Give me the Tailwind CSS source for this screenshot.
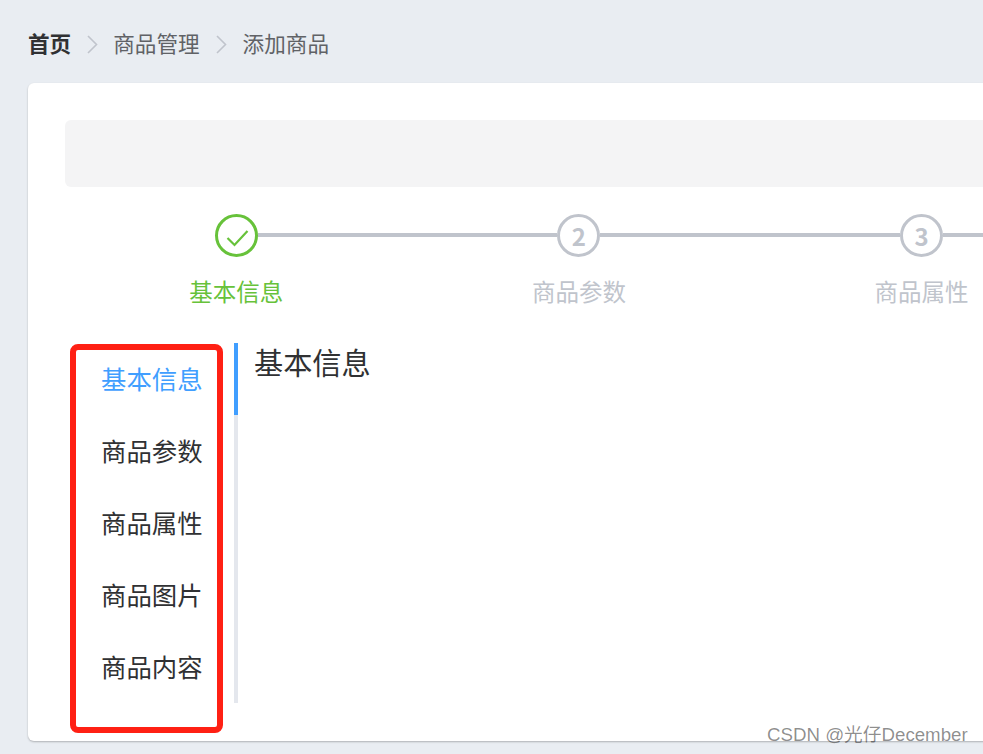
<!DOCTYPE html>
<html lang="zh-CN">
<head>
<meta charset="utf-8">
<script src="https://cdn.jsdelivr.net/npm/@tailwindcss/browser@4"></script>
</head>
<body class="m-0">
<div class="relative w-[983px] h-[754px] overflow-hidden bg-[#e9edf2] pl-[28px] pt-[28px] font-['Noto_Sans_CJK_SC','Noto_Sans',sans-serif]">
  <nav class="flex items-center h-[30px] text-[21.6px] leading-[30px]">
    <span class="font-bold text-[#303133]">首页</span>
    <svg class="ml-[16px] mr-[15px] w-[11px] h-[19px] relative top-[1px]" viewBox="0 0 11 19" fill="none" stroke="#c0c4cc" stroke-width="1.6"><path d="M1 1l8.500 8.500L1 18"/></svg>
    <span class="text-[#606266]">商品管理</span>
    <svg class="ml-[16px] mr-[16px] w-[11px] h-[19px] relative top-[1px]" viewBox="0 0 11 19" fill="none" stroke="#c0c4cc" stroke-width="1.6"><path d="M1 1l8.500 8.500L1 18"/></svg>
    <span class="text-[#606266]">添加商品</span>
  </nav>
  <main class="mt-[25px] w-[1000px] h-[658px] overflow-hidden rounded-[6px] bg-white shadow-[0_1px_2px_rgba(0,0,0,0.25)] pl-[37px] pt-[37px]">
    <div class="h-[67px] rounded-[6px] bg-[#f4f4f5]"></div>
    <div class="flex mt-[27px]">
      <div class="w-[342.6px] shrink-0 flex flex-col items-center">
        <div class="flex items-center w-full">
          <div class="flex-1"></div>
          <div class="w-[43px] h-[43px] shrink-0 rounded-full border-[3px] border-[#67c23a] flex items-center justify-center">
            <svg class="w-[37px] h-[37px]" viewBox="0 0 37 37" fill="none" stroke="#67c23a" stroke-width="2.200"><path d="M9.500 21l7 7 13-14"/></svg>
          </div>
          <div class="flex-1 h-[4px] relative top-[-1px] bg-[#c0c4cc]"></div>
        </div>
        <div class="mt-[16px] text-[23.5px] leading-[36px] text-[#67c23a]">基本信息</div>
      </div>
      <div class="w-[342.6px] shrink-0 flex flex-col items-center">
        <div class="flex items-center w-full">
          <div class="flex-1 h-[4px] relative top-[-1px] bg-[#c0c4cc]"></div>
          <div class="w-[43px] h-[43px] shrink-0 rounded-full border-[3px] border-[#c0c4cc] flex items-center justify-center text-[24px] font-bold leading-none text-[#c0c4cc]">2</div>
          <div class="flex-1 h-[4px] relative top-[-1px] bg-[#c0c4cc]"></div>
        </div>
        <div class="mt-[16px] text-[23.5px] leading-[36px] text-[#c0c4cc]">商品参数</div>
      </div>
      <div class="w-[342.6px] shrink-0 flex flex-col items-center">
        <div class="flex items-center w-full">
          <div class="flex-1 h-[4px] relative top-[-1px] bg-[#c0c4cc]"></div>
          <div class="w-[43px] h-[43px] shrink-0 rounded-full border-[3px] border-[#c0c4cc] flex items-center justify-center text-[24px] font-bold leading-none text-[#c0c4cc]">3</div>
          <div class="flex-1 h-[4px] relative top-[-1px] bg-[#c0c4cc]"></div>
        </div>
        <div class="mt-[16px] text-[23.5px] leading-[36px] text-[#c0c4cc]">商品属性</div>
      </div>
    </div>
    <div class="flex mt-[34px] ml-[36px]">
      <div class="relative w-[137px] h-[360px] border-r-[4px] border-[#e4e7ed] text-right pr-[32px] text-[25.4px] leading-[71.9px] whitespace-nowrap text-[#303133]">
        <div class="text-[#409eff]">基本信息</div>
        <div>商品参数</div>
        <div>商品属性</div>
        <div>商品图片</div>
        <div>商品内容</div>
        <div class="absolute right-[-4px] top-0 w-[4px] h-[72px] bg-[#409eff]"></div>
      </div>
      <div class="pl-[16px] text-[29.2px] leading-[37px] text-[#303133]">基本信息</div>
    </div>
  </main>
  <div class="absolute left-[70px] top-[344px] w-[153px] h-[389px] rounded-[8px] border-[6px] border-[#ff2014]"></div>
  <div class="absolute left-[767px] top-[722px] text-[18.7px] leading-[26px] text-black/45 whitespace-nowrap font-['Liberation_Sans','Noto_Sans_CJK_SC',sans-serif]">CSDN @光仔December</div>
</div>
</body>
</html>
